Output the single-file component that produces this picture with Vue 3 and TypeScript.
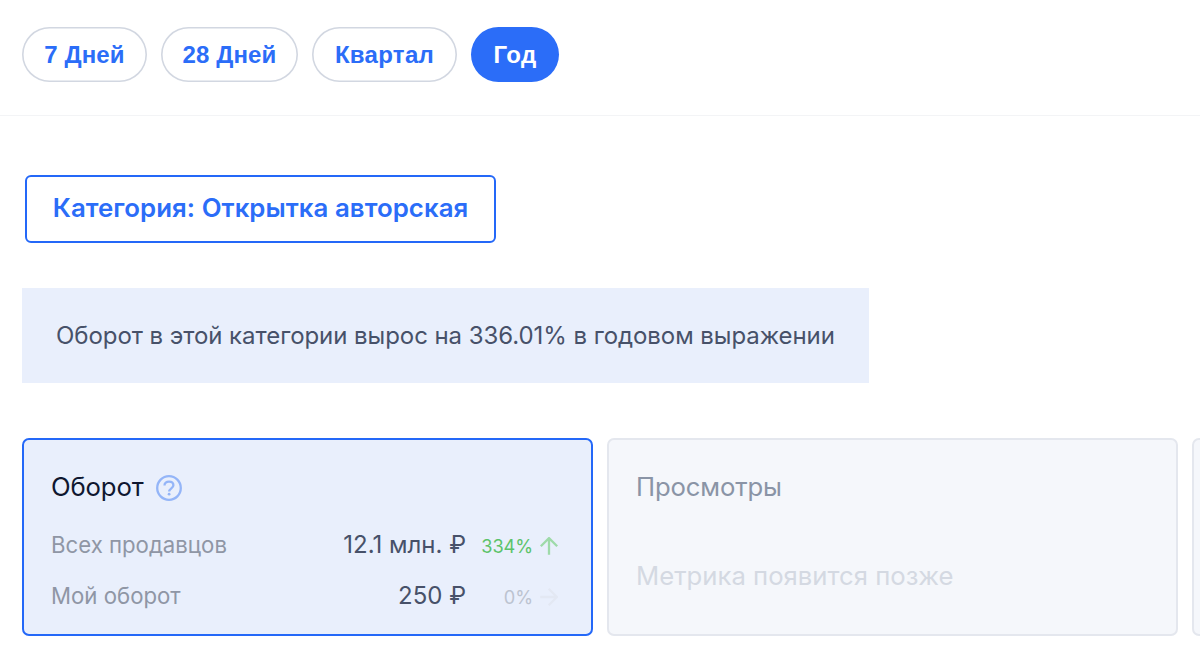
<template>
  <div class="page">
    <div class="period-bar">
      <button
        v-for="period in periods"
        :key="period.id"
        class="period-button"
        :class="[period.id, { active: period.id === activePeriod }]"
        @click="activePeriod = period.id"
      >
        {{ period.label }}
      </button>
    </div>

    <div class="content">
      <button class="category-button"><span>Категория: Открытка авторская</span></button>

      <div class="notice">
        <span>Оборот в этой категории вырос на 336.01% в годовом выражении</span>
      </div>

      <div class="cards">
        <div class="card selected">
          <div class="card-header">
            <span class="card-title">Оборот</span>
            <svg class="help-icon" viewBox="0 0 26 26">
              <circle cx="13" cy="13" r="11.8" />
              <path d="M8.5 10.4C8.5 8 10.4 6.6 13 6.6s4.4 1.5 4.4 3.6c0 3-4.2 3.2-4.2 6.4" />
              <circle class="dot" cx="13.1" cy="19.2" r="1.4" />
            </svg>
          </div>
          <div v-for="row in rows" :key="row.label" class="card-row">
            <span class="row-label">{{ row.label }}</span>
            <span class="row-value">{{ row.value }}</span>
            <span class="row-change" :class="row.trend">{{ row.change }}</span>
            <svg class="arrow" :class="row.trend" viewBox="0 0 18 18">
              <path d="M9 17.8V1.4M0.8 9.3L9 1.1l8.2 8.2" />
            </svg>
          </div>
        </div>

        <div class="card">
          <div class="card-header">
            <span class="card-title">Просмотры</span>
          </div>
          <p class="card-empty">Метрика появится позже</p>
        </div>

        <div class="card"></div>
      </div>
    </div>
  </div>
</template>

<script setup lang="ts">
import { ref } from 'vue'

interface Row {
  label: string
  value: string
  change: string
  trend: 'up' | 'flat'
}

const periods = [
  { id: 'week', label: '7 Дней' },
  { id: 'month', label: '28 Дней' },
  { id: 'quarter', label: 'Квартал' },
  { id: 'year', label: 'Год' },
]

const activePeriod = ref('year')

const rows: Row[] = [
  { label: 'Всех продавцов', value: '12.1 млн. ₽', change: '334%', trend: 'up' },
  { label: 'Мой оборот', value: '250 ₽', change: '0%', trend: 'flat' },
]
</script>

<style>
body {
  margin: 0;
  background: #ffffff;
  overflow: hidden;
}
</style>

<style scoped>
.page {
  height: 657px;
  overflow: hidden;
  font-family: Inter, sans-serif;
  color: #475169;
}

button {
  box-sizing: border-box;
  padding: 0;
  cursor: pointer;
  white-space: nowrap;
}

.period-bar {
  box-sizing: border-box;
  display: flex;
  gap: 14px;
  height: 116px;
  padding: 27px 22px 0;
  border-bottom: 1px solid #f3f4f6;
}

.period-button {
  height: 55px;
  border: none;
  border-radius: 28px;
  background: #ffffff;
  box-shadow: inset 0 0 0 1.6px #d2d7e1;
  color: #2b6df8;
  font: bold 24px/1 "Liberation Sans", Arial, sans-serif;
  letter-spacing: 0.1px;
}

.period-button.active {
  background: #2b6df8;
  box-shadow: none;
  color: #ffffff;
}

.week {
  width: 125px;
}

.month {
  width: 137px;
}

.quarter {
  width: 145px;
  letter-spacing: 0.3px;
}

.year {
  width: 88px;
  letter-spacing: 0.4px;
}

.content {
  display: flex;
  flex-direction: column;
  align-items: flex-start;
  padding: 59px 0 0 22px;
}

.category-button {
  width: 471px;
  height: 68px;
  margin-left: 3px;
  padding-bottom: 2px;
  border: 2px solid #2468f8;
  border-radius: 6px;
  background: #ffffff;
  color: #2b6df8;
  font: 600 25.8px/1 Inter, sans-serif;
  letter-spacing: 0.05px;
}

.notice {
  box-sizing: border-box;
  width: 847px;
  height: 95px;
  margin-top: 45px;
  padding-left: 34px;
  background: #e9effc;
  font-size: 24px;
  line-height: 95px;
  letter-spacing: -0.06px;
  white-space: nowrap;
}

.cards {
  display: flex;
  gap: 14px;
  margin-top: 55px;
}

.card {
  box-sizing: border-box;
  flex: none;
  width: 571px;
  height: 198px;
  padding: 28px 28px 0 27px;
  border: 2px solid #e4e7ee;
  border-radius: 7px;
  background: #f5f7fb;
}

.card.selected {
  border-color: #2468f8;
  background: #e9effc;
}

.card-header {
  display: flex;
  align-items: center;
  gap: 13px;
  height: 36px;
  margin-bottom: 15px;
}

.card-title {
  font-size: 25.7px;
  letter-spacing: -0.15px;
  color: #8a94a6;
}

.selected .card-title {
  color: #0f1730;
}

.help-icon {
  width: 26px;
  height: 26px;
  margin-top: 3px;
  fill: none;
  stroke: #94b5f8;
  stroke-width: 2.3;
}

.help-icon .dot {
  fill: #94b5f8;
  stroke: none;
}

.card-row {
  display: flex;
  align-items: center;
  height: 51px;
}

.row-label {
  flex: 1;
  font-size: 22.2px;
  color: #8f96a5;
}

.row-value {
  font-size: 24px;
}

.row-change {
  width: 67px;
  padding-top: 2px;
  font-size: 18.2px;
  letter-spacing: -0.1px;
  text-align: right;
}

.row-change.up {
  color: #5cc36a;
}

.row-change.flat {
  color: #bcc3d0;
}

.arrow {
  width: 18px;
  height: 18px;
  margin: 2px 5px 0 7px;
  fill: none;
  stroke-width: 2.3;
}

.arrow.up {
  stroke: #9edaa9;
}

.arrow.flat {
  stroke: #e3e8f3;
  transform: rotate(90deg);
}

.card-empty {
  margin: 54px 0 0;
  font-size: 25.7px;
  line-height: 36px;
  color: #d4d9e2;
}
</style>
